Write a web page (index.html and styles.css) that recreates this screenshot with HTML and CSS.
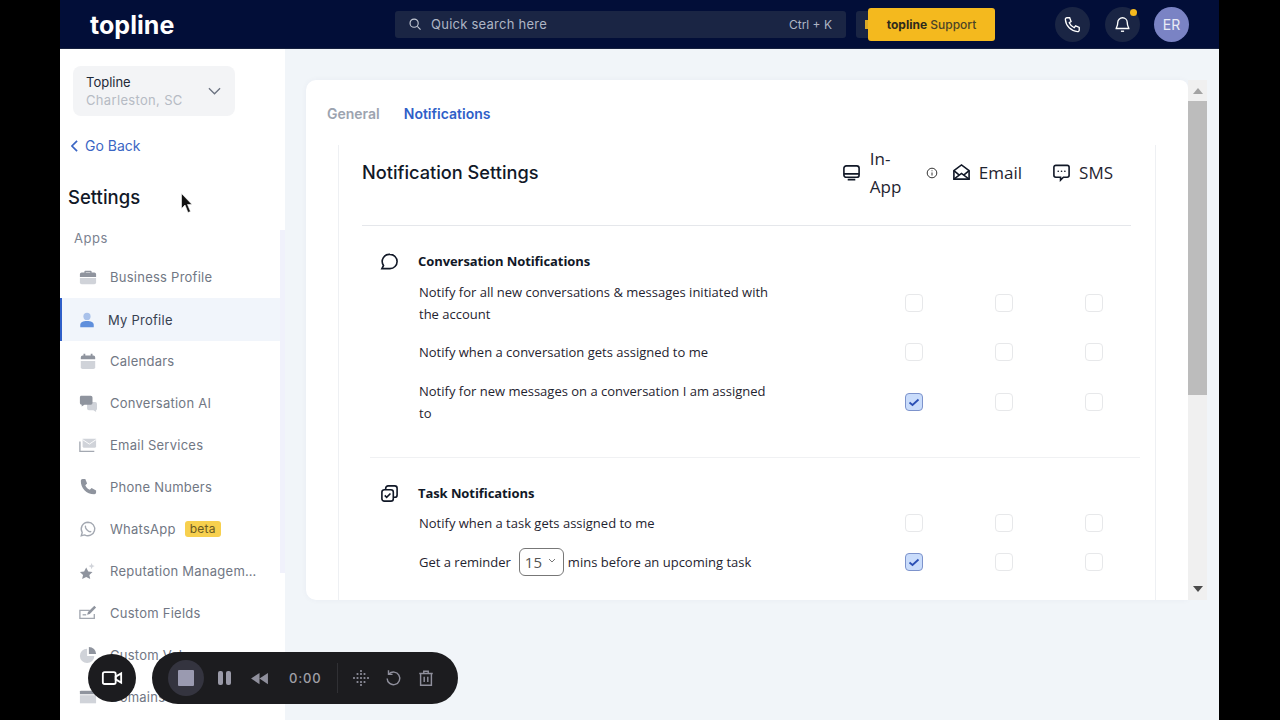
FILE: index.html
```html
<!DOCTYPE html>
<html lang="en">
<head>
    <meta charset="UTF-8">
    <meta name="viewport" content="width=device-width, initial-scale=1.0">
    <title>Notification Settings</title>
    <link rel="stylesheet" href="styles.css">
</head>
<body>
<div class="screen">
    <header class="topbar">
        <div class="logo">topline</div>
        <div class="search">
            <svg class="search-icon" viewBox="0 0 24 24"><circle cx="10.5" cy="10.5" r="7"/><path d="M16 16l5.5 5.5"/></svg>
            <span class="search-text">Quick search here</span>
            <span class="search-key">Ctrl + K</span>
        </div>
        <div class="chip"></div>
        <div class="support"><b>topline</b> Support</div>
        <div class="round first">
            <svg viewBox="0 0 24 24"><path d="M5 3.5h3.4l1.8 4.6-2.3 1.7a12 12 0 0 0 6.3 6.3l1.7-2.3 4.6 1.8V19a2 2 0 0 1-2.2 2A16.500 16.500 0 0 1 3 5.700 2 2 0 0 1 5 3.500z"/></svg>
        </div>
        <div class="round bell">
            <svg viewBox="0 0 24 24"><path d="M12 3.500a6 6 0 0 0-6 6c0 5-2 6.500-2 7.500h16c0-1-2-2.500-2-7.500a6 6 0 0 0-6-6z"/><path d="M10 20.500h4"/></svg>
            <span class="dot"></span>
        </div>
        <div class="avatar">ER</div>
    </header>

    <div class="body">
        <aside class="sidebar">
            <div class="picker">
                <div>
                    <div class="picker-name">Topline</div>
                    <div class="picker-place">Charleston, SC</div>
                </div>
                <svg class="picker-arrow" viewBox="0 0 14 8"><path d="M1 1l6 6 6-6"/></svg>
            </div>
            <div class="back">
                <svg viewBox="0 0 8 14"><path d="M7 1L1 7l6 6"/></svg>
                Go Back
            </div>
            <h2 class="side-title">Settings</h2>
            <div class="side-group">Apps</div>
            <ul class="menu">
                <li>
                    <svg class="menu-icon" viewBox="0 0 20 20"><path class="dk" d="M7 3h6a1 1 0 0 1 1 1v1h3a2 2 0 0 1 2 2v3H1V7a2 2 0 0 1 2-2h3V4a1 1 0 0 1 1-1zm.500 2h5V4.500h-5z"/><path class="lt" d="M1 11h18v5a2 2 0 0 1-2 2H3a2 2 0 0 1-2-2z"/></svg>
                    <span>Business Profile</span>
                </li>
                <li class="active">
                    <svg class="menu-icon" viewBox="0 0 20 20"><circle class="lt-blue" cx="10" cy="6" r="4"/><path class="blue" d="M2.500 18v-2.500c0-3 3-4.500 7.500-4.500s7.500 1.500 7.500 4.500V18z"/></svg>
                    <span>My Profile</span>
                </li>
                <li>
                    <svg class="menu-icon" viewBox="0 0 20 20"><path class="dk" d="M5 2h2v2h6V2h2v2h1a2 2 0 0 1 2 2v2H2V6a2 2 0 0 1 2-2h1z"/><path class="lt" d="M2 10h16v7a2 2 0 0 1-2 2H4a2 2 0 0 1-2-2z"/></svg>
                    <span>Calendars</span>
                </li>
                <li>
                    <svg class="menu-icon" viewBox="0 0 20 20"><path class="lt" d="M9 9h9a2 2 0 0 1 2 2v5a2 2 0 0 1-1 2v2l-3-2H11a2 2 0 0 1-2-2z"/><path class="dk" d="M2 2h11a2 2 0 0 1 2 2v6a2 2 0 0 1-2 2H6l-3 2v-2a2 2 0 0 1-2-2V4a2 2 0 0 1 1-2z"/></svg>
                    <span>Conversation AI</span>
                </li>
                <li>
                    <svg class="menu-icon" viewBox="0 0 20 20"><path class="lt" d="M4 3h15v9l-1 1H5l-1-1z"/><path class="stroke" d="M1 6v11h16"/><path class="white-line" d="M4 4l7.500 5L19 4"/></svg>
                    <span>Email Services</span>
                </li>
                <li>
                    <svg class="menu-icon" viewBox="0 0 20 20"><path class="dk" d="M4 1h3l2 5-2 2c1 2.500 2.500 4 5 5l2-2 5 3v2a2 2 0 0 1-2 2C8 18 2 11 2 3a2 2 0 0 1 2-2z"/></svg>
                    <span>Phone Numbers</span>
                </li>
                <li>
                    <svg class="menu-icon" viewBox="0 0 20 20"><path class="stroke" d="M10 2.500a7.500 7.500 0 0 0-6.400 11.400L2.500 17.500l3.700-1A7.500 7.500 0 1 0 10 2.500z"/><path class="stroke" d="M7.500 6.500c-1 1 0 3 1.500 4.500s3.500 2.500 4.500 1.500"/></svg>
                    <span>WhatsApp</span><span class="beta">beta</span>
                </li>
                <li>
                    <svg class="menu-icon" viewBox="0 0 20 20"><path class="dk" d="M8 6l2.300 4.500 4.700.600-3.500 3.300 1 4.600L8 16.600 3.500 19l1-4.600L1 11.100l4.700-.600z"/><path class="lt" d="M14 1l1 2.500 2.500 1-2.500 1-1 2.500-1-2.500-2.500-1 2.500-1z"/></svg>
                    <span class="clip">Reputation Management</span>
                </li>
                <li>
                    <svg class="menu-icon" viewBox="0 0 20 20"><path class="stroke" d="M12 7H1v9h16v-5"/><path class="dk" d="M17 2l2 2-7 7-3 1 1-3z"/><path class="stroke" d="M4 12h4"/></svg>
                    <span>Custom Fields</span>
                </li>
                <li>
                    <svg class="menu-icon" viewBox="0 0 20 20"><path class="lt" d="M9 3a8 8 0 1 0 8 8H9z"/><path class="dk" d="M11 1a8 8 0 0 1 8 8h-8z"/></svg>
                    <span>Custom Values</span>
                </li>
                <li>
                    <svg class="menu-icon" viewBox="0 0 20 20"><path class="dk" d="M1 4a1 1 0 0 1 1-1h16a1 1 0 0 1 1 1v3H1z"/><path class="lt" d="M1 8h18v9H1z"/></svg>
                    <span>Domains</span>
                </li>
            </ul>
            <div class="side-scroll"></div>
        </aside>

        <main class="main">
            <div class="card">
                <div class="tabs">
                    <span class="tab">General</span>
                    <span class="tab current">Notifications</span>
                </div>
                <div class="panel">
                    <div class="panel-head">
                        <h1>Notification Settings</h1>
                        <div class="channels">
                            <div class="channel inapp">
                                <svg viewBox="0 0 20 20"><rect x="2" y="3" width="16" height="12" rx="2.500"/><path d="M2 11.500h16M6 17.500h8"/></svg>
                                <span class="inapp-text">In-App</span>
                            </div>
                            <svg class="info" viewBox="0 0 12 12"><circle cx="6" cy="6" r="4.800"/><path d="M6 5.500v3M6 3.400v.8"/></svg>
                            <div class="channel email">
                                <svg viewBox="0 0 20 20"><path d="M2 8l8-6 8 6v9H2z"/><path d="M2 8l6 5M18 8l-6 5M2 17l8-6 8 6"/></svg>
                                <span>Email</span>
                            </div>
                            <div class="channel sms">
                                <svg viewBox="0 0 20 20"><path d="M4 2.500h12a2 2 0 0 1 2 2V13a2 2 0 0 1-2 2h-4l-3 3v-3H4a2 2 0 0 1-2-2V4.500a2 2 0 0 1 2-2z"/><path d="M6.500 8.700h.1M10 8.700h.1M13.500 8.700h.1"/></svg>
                                <span>SMS</span>
                            </div>
                        </div>
                    </div>

                    <section class="group">
                        <div class="group-title">
                            <svg viewBox="0 0 20 20"><path d="M10.500 2.500a7.500 7.500 0 0 1 0 15H2l1.700-3.300A7.500 7.500 0 0 1 10.500 2.500z"/></svg>
                            Conversation Notifications
                        </div>
                        <div class="row tight">
                            <div class="row-text">Notify for all new conversations &amp; messages initiated with the account</div>
                            <span class="check"></span><span class="check"></span><span class="check"></span>
                        </div>
                        <div class="row">
                            <div class="row-text">Notify when a conversation gets assigned to me</div>
                            <span class="check"></span><span class="check"></span><span class="check"></span>
                        </div>
                        <div class="row">
                            <div class="row-text">Notify for new messages on a conversation I am assigned to</div>
                            <span class="check on"><svg viewBox="0 0 18 18"><path d="M4.500 9.500l3 2.500 6-5.500"/></svg></span><span class="check"></span><span class="check"></span>
                        </div>
                    </section>

                    <section class="group second">
                        <div class="group-title">
                            <svg viewBox="0 0 20 20"><rect x="2" y="6" width="12" height="12" rx="2.500"/><path d="M6 6V4.500A2.500 2.500 0 0 1 8.500 2h7A2.500 2.500 0 0 1 18 4.500v7a2.500 2.500 0 0 1-2.500 2.500H14"/><path d="M5 12l2 2 4-4"/></svg>
                            Task Notifications
                        </div>
                        <div class="row">
                            <div class="row-text">Notify when a task gets assigned to me</div>
                            <span class="check"></span><span class="check"></span><span class="check"></span>
                        </div>
                        <div class="row">
                            <div class="row-text reminder"><span>Get a reminder</span><span class="select">15<svg viewBox="0 0 8 5"><path d="M1 1l3 3 3-3"/></svg></span><span>mins before an upcoming task</span></div>
                            <span class="check on"><svg viewBox="0 0 18 18"><path d="M4.500 9.500l3 2.500 6-5.500"/></svg></span><span class="check"></span><span class="check"></span>
                        </div>
                    </section>
                </div>
            </div>
            <div class="page-scroll">
                <span class="arrow-up"></span>
                <div class="page-thumb"></div>
                <span class="arrow-down"></span>
            </div>
        </main>
    </div>

    <!-- recorder lies over the page -->
    <div class="cam">
        <svg viewBox="0 0 24 24"><rect x="2" y="5.500" width="14" height="13" rx="2"/><path d="M16 10.500l6-3.500v10l-6-3.500z"/></svg>
    </div>
    <div class="recorder">
        <span class="stop"><i></i></span>
        <span class="pause"><i></i><i></i></span>
        <svg class="rewind" viewBox="0 0 20 16"><path d="M10 2v12L1 8zM19 2v12l-9-6z"/></svg>
        <span class="time">0:00</span>
        <span class="rec-line"></span>
        <svg class="dots" viewBox="0 0 18 18"><path d="M9 2h.01M5.500 5h.01M9 5h.01M12.500 5h.01M2 9h.01M5.500 9h.01M9 9h.01M12.500 9h.01M16 9h.01M5.500 13h.01M9 13h.01M12.500 13h.01M9 16h.01"/></svg>
        <svg class="rec-icon undo" viewBox="0 0 20 20"><path d="M5.500 5.500a7 7 0 1 1-2 5"/><path d="M5 1.500v4.500h4.500"/></svg>
        <svg class="rec-icon trash" viewBox="0 0 20 20"><path d="M2.500 5h15M7.500 5V2.500h5V5M4 5v13h12V5M8 8.500v6M12 8.500v6"/></svg>
    </div>
    <svg class="cursor" viewBox="0 0 11 22"><path d="M0.500 0.500v15l3.500-3.500 3 7.500 2.500-1-3-7h4.500z"/></svg>
</div>
</body>
</html>
```
FILE: styles.css
```css
*{
    box-sizing: border-box;
}
html,body{
    margin: 0;
    height: 100%;
    background-color: #000;
    overflow: hidden;
}
.screen{
    position: relative;
    width: 1159px;
    height: 720px;
    margin-left: 60px;
    background-color: #f1f5f9;
    font-family: Inter, "Liberation Sans", sans-serif;
    overflow: hidden;
}

/* top bar */
.topbar{
    display: flex;
    align-items: center;
    height: 49px;
    background-color: #020e38;
    border-bottom: 1px solid #16213f;
}
.logo{
    width: 335px;
    padding: 2px 0 0 30px;
    color: #fff;
    font-size: 25px;
    font-weight: 700;
    letter-spacing: 0.05px;
}
.search{
    display: flex;
    align-items: center;
    width: 451px;
    height: 27px;
    padding-left: 13px;
    background-color: #1a2544;
    border-radius: 3px;
    color: #aeb5c4;
    font-size: 13px;
}
.search-icon{
    width: 14px;
    height: 14px;
    fill: none;
    stroke: #c3c8d3;
    stroke-width: 2;
}
.search-text{
    flex: 1;
    margin-left: 9px;
    letter-spacing: 0.25px;
}
.search-key{
    margin-right: 14px;
    font-size: 12px;
}
.chip{
    position: relative;
    width: 20px;
    height: 27px;
    margin-left: 10px;
    background-color: #1a2544;
    border-radius: 3px 0 0 3px;
}
.chip:before{
    content: "";
    position: absolute;
    top: 9px;
    left: 9px;
    width: 4px;
    height: 9px;
    background-color: #d9a826;
}
.support{
    position: relative;
    width: 127px;
    height: 33px;
    margin-left: -8px;
    background-color: #f4b91e;
    border-radius: 3px;
    color: #4c4426;
    font-size: 12px;
    font-weight: 500;
    line-height: 33px;
    text-align: center;
}
.support b{
    color: #2e2a1c;
    font-weight: 700;
}
.round{
    position: relative;
    display: flex;
    align-items: center;
    justify-content: center;
    width: 35px;
    height: 35px;
    margin-left: 15px;
    background-color: #1a2544;
    border-radius: 50%;
}
.round.first{
    margin-left: 60px;
}
.round svg{
    width: 19px;
    height: 19px;
    fill: none;
    stroke: #fff;
    stroke-width: 1.7;
}
.dot{
    position: absolute;
    top: 2px;
    right: 3px;
    width: 7px;
    height: 7px;
    background-color: #f4b91e;
    border-radius: 50%;
}
.avatar{
    width: 35px;
    height: 35px;
    margin-left: 14px;
    background-color: #7a83c4;
    border-radius: 50%;
    color: #e9ebf6;
    font-size: 14px;
    line-height: 35px;
    text-align: center;
}

.body{
    display: flex;
    height: 671px;
}

/* sidebar */
.sidebar{
    position: relative;
    width: 225px;
    height: 671px;
    padding-top: 17px;
    background-color: #fff;
    overflow: hidden;
}
.picker{
    display: flex;
    align-items: center;
    justify-content: space-between;
    width: 162px;
    height: 50px;
    margin-left: 13px;
    padding: 0 14px 0 13px;
    background-color: #f3f4f6;
    border-radius: 8px;
}
.picker-name{
    margin-top: -1px;
    color: #1f2937;
    font-size: 13px;
    line-height: 18px;
}
.picker-place{
    color: #b6bbc4;
    font-size: 13px;
    line-height: 18px;
    letter-spacing: 0.33px;
}
.picker-arrow{
    width: 13px;
    height: 8px;
    fill: none;
    stroke: #6b7280;
    stroke-width: 1.400;
}
.back{
    display: flex;
    align-items: center;
    gap: 7px;
    margin: 21px 0 0 11px;
    color: #3b66c4;
    font-size: 14px;
    line-height: 18px;
}
.back svg{
    width: 7px;
    height: 12px;
    fill: none;
    stroke: #3b66c4;
    stroke-width: 2;
}
.side-title{
    margin: 30px 0 0 8px;
    color: #111827;
    font-size: 18.5px;
    font-weight: 500;
    line-height: 24px;
}
.side-group{
    margin: 20px 0 0 14px;
    color: #7b8290;
    font-size: 13px;
    line-height: 18px;
    letter-spacing: 0.5px;
}
.menu{
    margin: 9px 0 0;
    padding: 0;
    width: 220px;
    list-style: none;
}
.menu li{
    display: flex;
    align-items: center;
    height: 42px;
    padding-left: 19px;
    color: #717784;
    font-size: 13px;
    letter-spacing: 0.25px;
    white-space: nowrap;
}
.menu li.active{
    height: 43px;
    margin-bottom: -1px;
    padding-left: 16px;
    background-color: #f1f5fb;
    border-left: 2px solid #2f5fc8;
    color: #374151;
}
.menu-icon{
    flex: none;
    width: 18px;
    height: 18px;
    margin-right: 13px;
}
.menu li.active .menu-icon{
    margin-right: 12px;
}
.dk{
    fill: #8f949e;
}
.lt{
    fill: #d0d3d9;
}
.blue{
    fill: #5f8fdc;
}
.lt-blue{
    fill: #a9c1ea;
}
.stroke{
    fill: none;
    stroke: #a3a8b1;
    stroke-width: 1.500;
}
.white-line{
    fill: none;
    stroke: #fff;
    stroke-width: 1;
}
.beta{
    margin-left: 9px;
    padding: 0 5px;
    background-color: #f7d04e;
    border-radius: 3px;
    color: #6a5a22;
    font-size: 12px;
    line-height: 16px;
}
.clip{
    width: 147px;
    overflow: hidden;
    text-overflow: ellipsis;
}
.side-scroll{
    position: absolute;
    top: 181px;
    right: 0;
    width: 5px;
    height: 343px;
    background-color: #f0f1fb;
}

/* main */
.main{
    display: flex;
    flex: 1;
    height: 671px;
    padding: 31px 12px 0 21px;
}
.card{
    flex: 1;
    height: 520px;
    background-color: #fff;
    border-radius: 10px 8px 0 10px;
    box-shadow: 0 0 6px rgba(30, 50, 90, 0.04);
    overflow: hidden;
}
.tabs{
    display: flex;
    align-items: center;
    gap: 24px;
    height: 65px;
    padding: 2px 0 0 21px;
    font-size: 14px;
    font-weight: 600;
}
.tab{
    color: #9ca3af;
}
.tab.current{
    color: #2f5fc8;
}
.panel{
    width: 818px;
    height: 455px;
    margin-left: 32px;
    padding: 0 24px 0 23px;
    border-left: 1px solid #eef0f3;
    border-right: 1px solid #eef0f3;
    font-family: "Open Sans", "Noto Sans", sans-serif;
    color: #1f2430;
}
.panel-head{
    display: flex;
    align-items: center;
    height: 81px;
    padding-bottom: 25px;
    border-bottom: 1px solid #e5e7eb;
}
.panel-head h1{
    flex: 1;
    margin: 0 0 1px;
    color: #111827;
    font-family: Inter, "Liberation Sans", sans-serif;
    font-size: 18.2px;
    font-weight: 500;
}
.channels{
    display: flex;
    align-items: center;
    padding-right: 18px;
    font-size: 17px;
    font-weight: 400;
}
.channel{
    display: flex;
    align-items: center;
}
.channel svg{
    width: 19px;
    height: 19px;
    margin-right: 8px;
    fill: none;
    stroke: #111827;
    stroke-width: 1.700;
}
.inapp-text{
    width: 36px;
    line-height: 28px;
}
.inapp svg{
    margin-right: 9px;
}
.info{
    width: 12px;
    height: 12px;
    margin: 0 14px 0 20px;
    fill: none;
    stroke: #333;
    stroke-width: 1;
}
.sms{
    margin-left: 30px;
}
.sms svg{
    stroke-linecap: round;
}
.group{
    margin: 24px 0 0;
    padding-bottom: 16px;
}
.group.second{
    margin-left: 8px;
    margin-right: -9px;
    padding-top: 24px;
    margin-top: 0;
    border-top: 1px solid #f0f1f3;
}
.group-title{
    display: flex;
    align-items: center;
    height: 22px;
    margin-bottom: 9px;
    color: #111827;
    font-size: 13px;
    font-weight: 700;
    letter-spacing: -0.08px;
}
.group-title svg{
    width: 19px;
    height: 19px;
    margin: 0 19px 0 18px;
    fill: none;
    stroke: #111827;
    stroke-width: 1.700;
}
.second .group-title{
    margin-bottom: 8px;
}
.second .group-title svg{
    margin-left: 10px;
}
.row{
    display: grid;
    grid-template-columns: 414px 18px 18px 18px;
    column-gap: 72px;
    align-items: center;
    margin: 0 0 17px 57px;
    font-size: 13px;
    line-height: 22px;
}
.row.tight{
    margin-bottom: 16px;
}
.second .row{
    margin-left: 49px;
}
.row-text{
    max-width: 360px;
}
.reminder{
    display: flex;
    align-items: center;
    max-width: none;
    white-space: nowrap;
}
.check{
    position: relative;
    width: 18px;
    height: 18px;
    border: 1.500px solid #e7e8ea;
    border-radius: 4px;
    background-color: #fff;
}
.check.on{
    background-color: #c9dcfb;
    border-color: #7d93cc;
}
.check svg{
    position: absolute;
    top: -1.500px;
    left: -1.500px;
    width: 18px;
    height: 18px;
    fill: none;
    stroke: #2a4fb5;
    stroke-width: 1.800;
}
.select{
    display: inline-flex;
    align-items: center;
    justify-content: space-between;
    width: 45px;
    height: 28px;
    margin: -3px 4px -3px 8px;
    padding: 0 7px 0 5px;
    border: 1px solid #777;
    border-radius: 6px;
    color: #555;
    font-size: 15px;
}
.select svg{
    width: 8px;
    height: 5px;
    margin-top: -4px;
    fill: none;
    stroke: #777;
}

/* scrollbar of the page */
.page-scroll{
    display: flex;
    flex-direction: column;
    align-items: center;
    width: 19px;
    height: 520px;
    background-color: #f0f0f0;
}
.arrow-up{
    width: 0;
    height: 0;
    margin: 8px 0 7px;
    border: 5px solid transparent;
    border-top: 0;
    border-bottom: 6px solid #a3a3a3;
}
.page-thumb{
    width: 19px;
    height: 294px;
    background-color: #bcbcbc;
}
.arrow-down{
    width: 0;
    height: 0;
    margin-top: 191px;
    border: 5px solid transparent;
    border-bottom: 0;
    border-top: 6px solid #4b4b4b;
}

/* recorder overlay */
.cam{
    position: absolute;
    top: 654px;
    left: 28px;
    display: flex;
    align-items: center;
    justify-content: center;
    width: 48px;
    height: 48px;
    background-color: #1c1c1f;
    border-radius: 50%;
}
.cam svg{
    width: 22px;
    height: 22px;
    fill: none;
    stroke: #fff;
    stroke-width: 2;
}
.recorder{
    position: absolute;
    top: 652px;
    left: 92px;
    display: flex;
    align-items: center;
    width: 306px;
    height: 52px;
    padding-left: 16px;
    background-color: #1c1c1f;
    border-radius: 26px;
}
.stop{
    display: flex;
    align-items: center;
    justify-content: center;
    width: 36px;
    height: 36px;
    background-color: #34343f;
    border-radius: 50%;
}
.stop i{
    width: 16px;
    height: 16px;
    background-color: #9a9ab0;
    border-radius: 1px;
}
.pause{
    display: flex;
    gap: 3px;
    margin-left: 14px;
}
.pause i{
    width: 5px;
    height: 14px;
    background-color: #9a9aa8;
    border-radius: 2px;
}
.rewind{
    width: 19px;
    height: 15px;
    margin-left: 19px;
    fill: #8f8f9c;
}
.time{
    margin-left: 20px;
    color: #a0a0a8;
    font-size: 13px;
    font-weight: 500;
    letter-spacing: 0.8px;
}
.rec-line{
    width: 1px;
    height: 30px;
    margin-left: 16px;
    background-color: #303034;
}
.dots{
    width: 18px;
    height: 18px;
    margin-left: 14px;
    fill: none;
    stroke: #8f8f9c;
    stroke-width: 2.200;
    stroke-linecap: round;
}
.rec-icon{
    width: 18px;
    height: 18px;
    fill: none;
    stroke: #8f8f9c;
    stroke-width: 1.600;
}
.undo{
    margin-left: 14px;
}
.trash{
    margin-left: 15px;
}
.cursor{
    position: absolute;
    top: 193px;
    left: 121px;
    width: 11px;
    height: 22px;
    fill: #111;
    stroke: #fff;
    stroke-width: 0.6;
}
```
